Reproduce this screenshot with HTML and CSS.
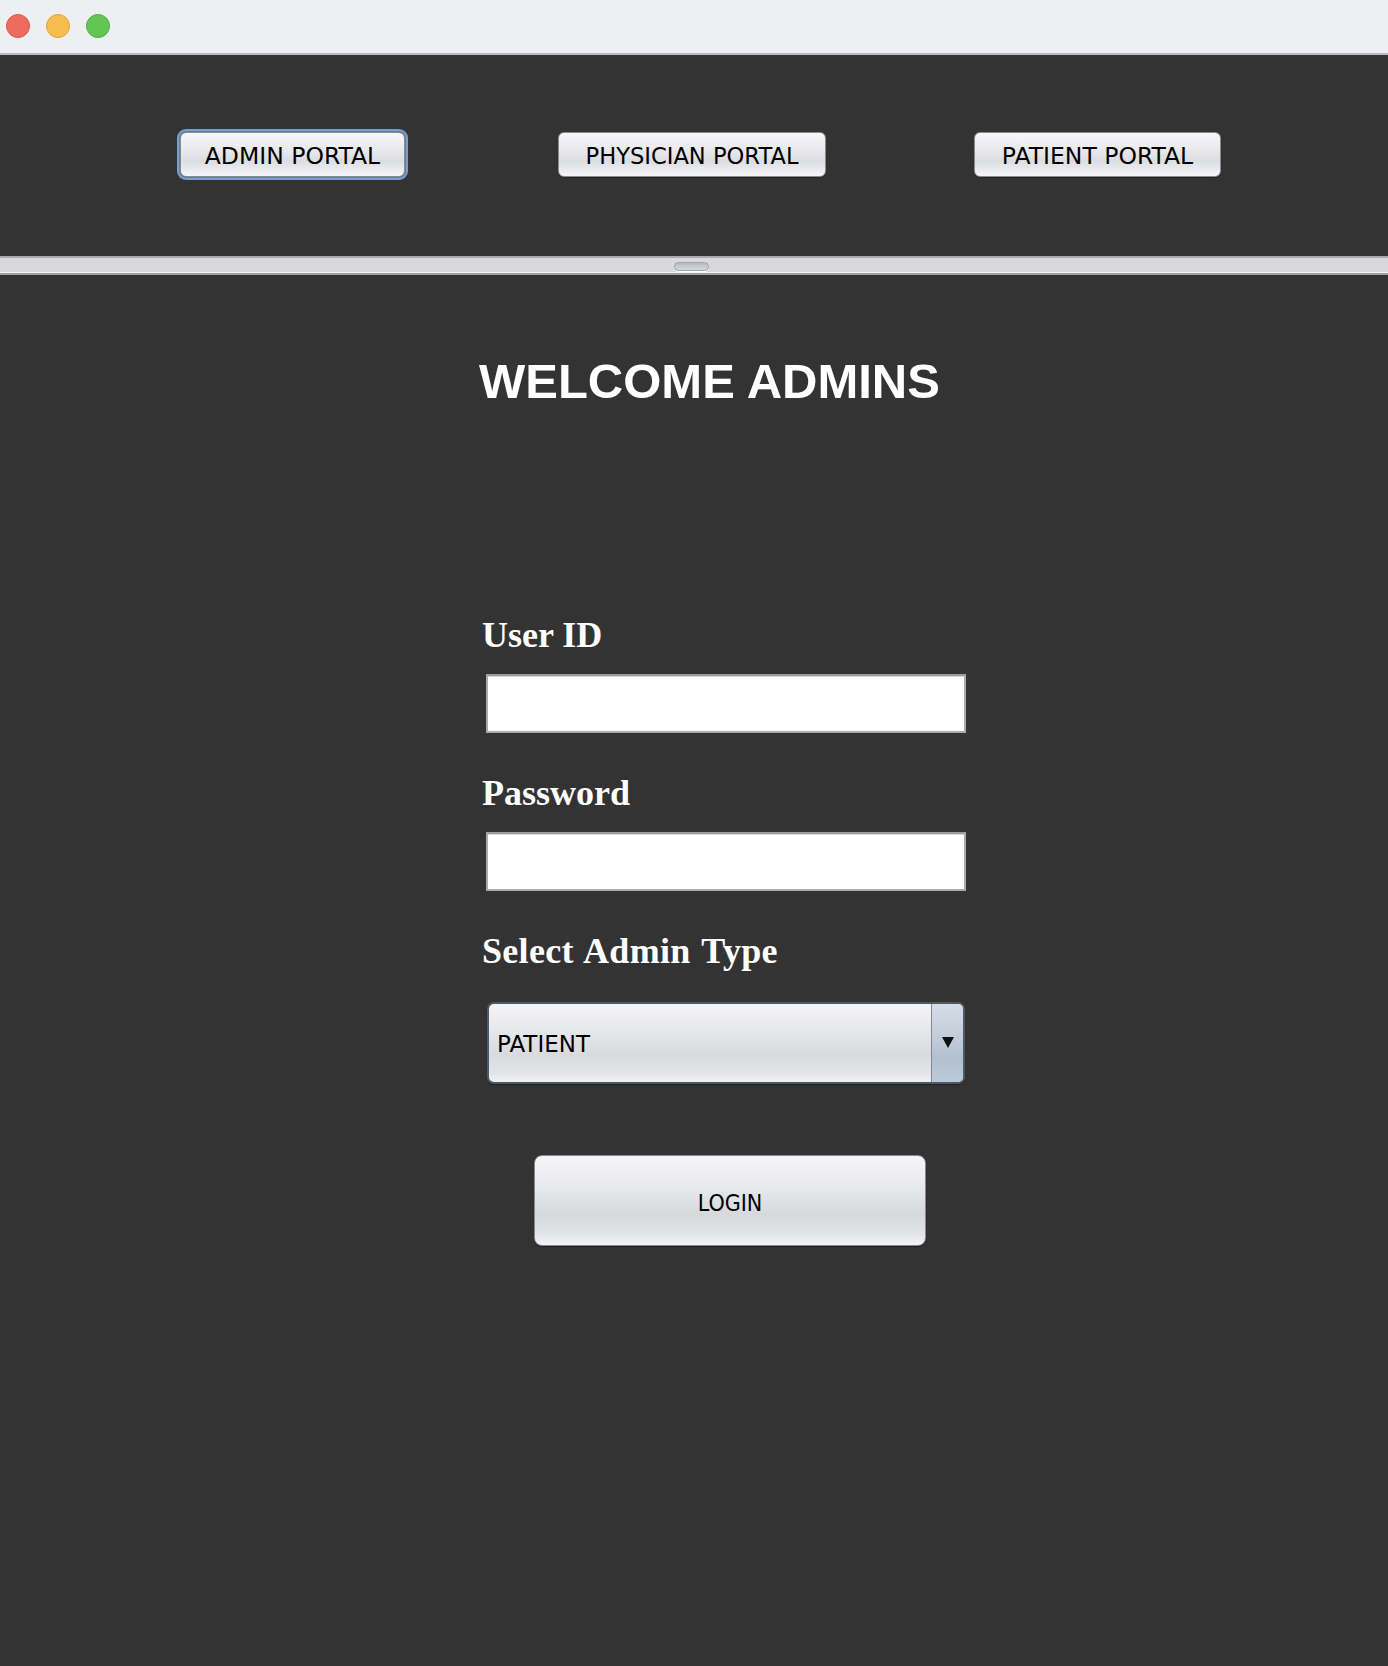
FILE: index.html
```html
<!DOCTYPE html>
<html lang="en">
<head>
<meta charset="utf-8">
<title>Admin Login</title>
<link rel="stylesheet" href="styles.css">
</head>
<body>
<div class="window">
  <header class="titlebar">
    <span class="light light-close"></span>
    <span class="light light-min"></span>
    <span class="light light-max"></span>
  </header>

  <nav class="portals">
    <button class="portal-btn portal-admin is-focused">ADMIN PORTAL</button>
    <button class="portal-btn portal-physician">PHYSICIAN PORTAL</button>
    <button class="portal-btn portal-patient">PATIENT PORTAL</button>
  </nav>

  <div class="splitter"><span class="grip"></span></div>

  <main class="login">
    <h1 class="welcome">WELCOME ADMINS</h1>
    <form class="login-form">
      <label class="field-label label-first">User ID</label>
      <div class="text-field"></div>
      <label class="field-label">Password</label>
      <div class="text-field"></div>
      <label class="field-label label-wide">Select Admin Type</label>
      <div class="combo">
        <span class="combo-value">PATIENT</span>
        <span class="combo-arrow"><span class="triangle"></span></span>
      </div>
      <button type="button" class="login-btn">LOGIN</button>
    </form>
  </main>
</div>
</body>
</html>
```

FILE: styles.css
```css
html, body {
  margin: 0;
  padding: 0;
}
body {
  background: #333333;
  width: 1388px;
  min-height: 1666px;
}
.window {
  display: flex;
  flex-direction: column;
}

/* title bar */
.titlebar {
  background: #eeeff1;
  border-bottom: 2px solid #bcbcc0;
  display: flex;
  align-items: flex-start;
  gap: 16px;
  padding: 14px 0 0 6px;
  box-sizing: content-box;
  height: 39px;
}
.light {
  width: 24px;
  height: 24px;
  border-radius: 50%;
  box-sizing: border-box;
}
.light-close { background: #ee6b60; border: 1px solid #d9574c; }
.light-min   { background: #f6be50; border: 1px solid #dfa23a; }
.light-max   { background: #62c554; border: 1px solid #4fab42; }

/* portal toolbar */
.portals {
  height: 201px;
  box-sizing: border-box;
  padding: 77px 0 0 180px;
  display: flex;
  align-items: flex-start;
}
.portal-btn {
  height: 45px;
  box-sizing: border-box;
  border: 1px solid #8a8a8f;
  border-radius: 6px;
  background: linear-gradient(#f7f7f9 0%, #e9e9ec 40%, #dcdde1 65%, #eeeff2 90%, #f6f6f8 100%);
  box-shadow: 0 1px 1px rgba(0,0,0,0.35);
  font-family: "DejaVu Sans", "Liberation Sans", sans-serif;
  font-size: 23.5px;
  color: #000;
  padding: 3px 0 0 0;
  line-height: 40px;
  text-align: center;
  white-space: nowrap;
}
.portal-admin { width: 225px; }
.portal-physician { width: 268px; margin-left: 153px; font-size: 22.6px; }
.portal-patient { width: 247px; margin-left: 148px; }
.is-focused {
  box-shadow: 0 0 0 1px #5d80ad, 0 0 0 3px #7b9fcb;
}

/* split pane divider */
.splitter {
  height: 19px;
  box-sizing: border-box;
  border-top: 2px solid #a9a9ae;
  background: #d8d8dd;
  box-shadow: inset 0 -2px 0 #9d9da2, inset 0 -3px 0 #f3f3f5;
  display: flex;
  justify-content: center;
  padding: 4px 5px 0 0;
}
.grip {
  width: 35px;
  height: 9px;
  box-sizing: border-box;
  border-radius: 5px;
  border: 1px solid #9ea2a9;
  background: linear-gradient(#b9bcc2, #d6d8dc);
  box-shadow: 0 1px 0 #ffffff;
}

/* login panel */
.login {
  padding: 82px 0 0 0;
  display: flex;
  flex-direction: column;
}
.welcome {
  margin: 0 0 0 479px;
  font-family: "Liberation Sans", Arial, sans-serif;
  font-weight: bold;
  font-size: 49px;
  line-height: 49px;
  color: #ffffff;
}
.login-form {
  margin: 211px 0 0 482px;
  display: flex;
  flex-direction: column;
  align-items: flex-start;
}
.field-label {
  font-family: "Liberation Serif", "Times New Roman", serif;
  font-weight: bold;
  font-size: 36px;
  line-height: 36px;
  color: #ffffff;
  margin-top: 42px;
}
.field-label.label-first { margin-top: 0; }
.field-label.label-wide { word-spacing: 2px; letter-spacing: 0.3px; }
.text-field {
  margin: 21px 0 0 4px;
  width: 480px;
  height: 59px;
  box-sizing: border-box;
  background: #ffffff;
  border: 2px solid #ababab;
  border-top-color: #9c9c9c;
  box-shadow: inset 0 1px 0 #dadada;
}
.combo {
  margin: 33px 0 0 5px;
  width: 478px;
  height: 82px;
  box-sizing: border-box;
  border: 2px solid #4f5866;
  border-radius: 7px;
  display: flex;
  overflow: hidden;
  background: linear-gradient(#f5f5f7 0%, #e6e7ea 35%, #d9dadd 65%, #e4e5e8 90%, #f2f2f4 100%);
  box-shadow: 0 1px 1px rgba(0,0,0,0.4);
}
.combo-value {
  flex: 1;
  padding: 2px 0 0 8px;
  font-family: "DejaVu Sans", "Liberation Sans", sans-serif;
  font-size: 23px;
  line-height: 76px;
  color: #000;
}
.combo-arrow {
  width: 31px;
  border-left: 1.5px solid #7f8896;
  background: linear-gradient(#d5dde7 0%, #c3ceda 40%, #b2c0cf 70%, #bccad8 100%);
  display: flex;
  align-items: center;
  justify-content: center;
}
.triangle {
  width: 0;
  height: 0;
  border-left: 6.5px solid transparent;
  border-right: 6.5px solid transparent;
  border-top: 11px solid #111;
  margin-top: -2px;
}
.login-btn {
  margin: 71px 0 0 52px;
  width: 392px;
  height: 91px;
  box-sizing: border-box;
  border: 1.5px solid #88898e;
  border-radius: 8px;
  background: linear-gradient(#f6f6f8 0%, #e8e9ec 35%, #d8d9dd 65%, #e3e4e7 88%, #f4f4f6 100%);
  box-shadow: 0 1px 1px rgba(0,0,0,0.4);
  font-family: "DejaVu Sans Condensed", "DejaVu Sans", sans-serif;
  font-stretch: condensed;
  font-size: 23px;
  color: #000;
  padding: 5px 0 0 0;
}
```
